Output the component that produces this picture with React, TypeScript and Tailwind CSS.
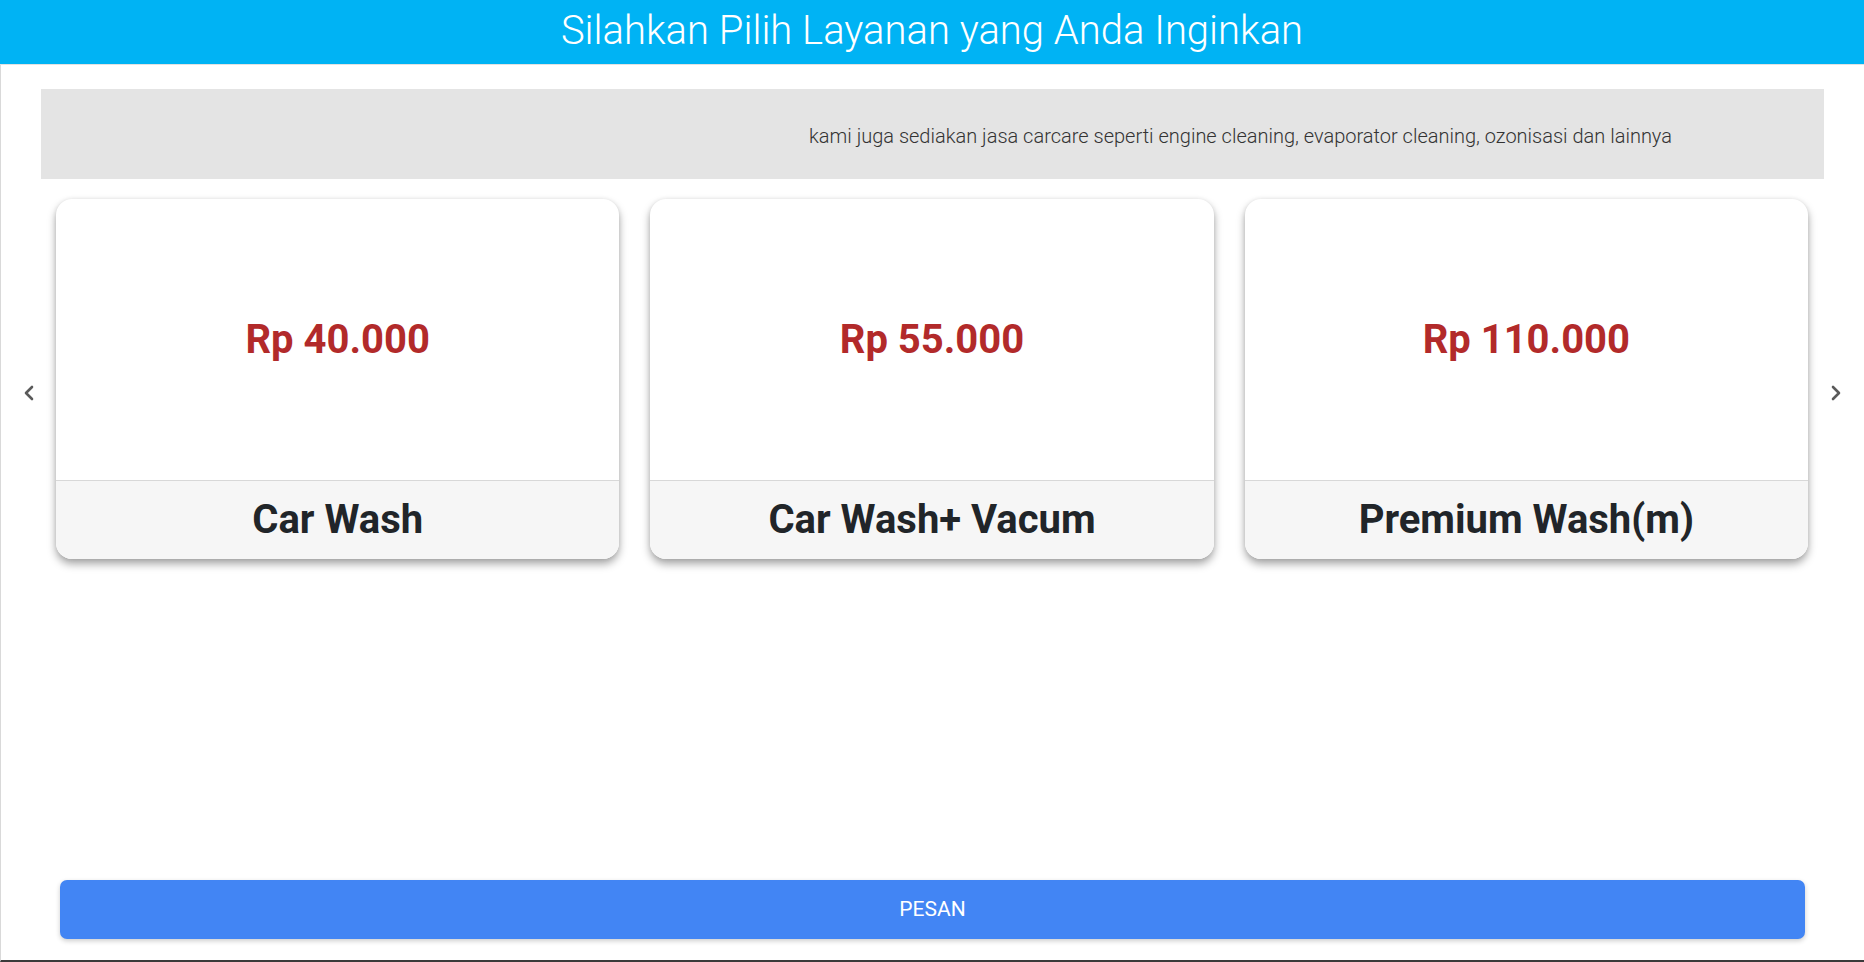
import React from "react";

type Layanan = {
  nama: string;
  harga: string;
};

const daftarLayanan: Layanan[] = [
  { nama: "Car Wash", harga: "Rp 40.000" },
  { nama: "Car Wash+ Vacum", harga: "Rp 55.000" },
  { nama: "Premium Wash(m)", harga: "Rp 110.000" },
];

const Chevron = ({ arah }: { arah: "kiri" | "kanan" }) => (
  <svg width="12" height="16" viewBox="0 0 12 16" fill="none">
    <path
      d={arah === "kiri" ? "M9 2L3 8l6 6" : "M3 2l6 6-6 6"}
      stroke="#5a5a5a"
      strokeWidth="2.6"
      strokeLinecap="round"
      strokeLinejoin="round"
    />
  </svg>
);

const KartuLayanan = ({ layanan }: { layanan: Layanan }) => (
  <div className="flex h-[360px] flex-col overflow-hidden rounded-2xl bg-white shadow-[0_5px_8px_rgba(0,0,0,0.35),0_0_4px_rgba(0,0,0,0.08)]">
    <div className="flex h-[281px] items-center justify-center">
      <p className="text-[40px] font-bold text-[#b22a2a]">{layanan.harga}</p>
    </div>
    <div className="flex flex-1 items-center justify-center border-t border-[#d8d8d8] bg-[#f6f6f6]">
      <p className="text-[40px] font-bold text-[#212529]">{layanan.nama}</p>
    </div>
  </div>
);

const App = () => {
  return (
    <div className="flex h-screen flex-col bg-white font-['Roboto',sans-serif]">
      <header className="flex h-[65px] shrink-0 items-center justify-center border-b border-[#e2e2e2] bg-[#00b3f4]">
        <h1 className="pb-[2px] text-[40px] font-light text-white">
          Silahkan Pilih Layanan yang Anda Inginkan
        </h1>
      </header>

      <main className="flex flex-1 flex-col border-b-2 border-l border-[#d9d9d9] border-b-[#3a3a3a]">
        <div className="mx-[40px] mt-[24px] flex h-[90px] items-center bg-[#e4e4e4] pl-[768px]">
          <p className="whitespace-nowrap pt-[4px] text-[20px] font-light text-[#333]">
            kami juga sediakan jasa carcare seperti engine cleaning, evaporator cleaning, ozonisasi dan lainnya
          </p>
        </div>

        <div className="mt-[20px] flex items-center">
          <button className="flex w-[55px] justify-center pt-[27px]">
            <Chevron arah="kiri" />
          </button>
          <div className="grid flex-1 grid-cols-3 gap-[31px]">
            {daftarLayanan.map((layanan) => (
              <KartuLayanan key={layanan.nama} layanan={layanan} />
            ))}
          </div>
          <button className="flex w-[56px] justify-center pt-[27px]">
            <Chevron arah="kanan" />
          </button>
        </div>

        <div className="flex-1" />

        <div className="mb-[21px] ml-[59px] mr-[59px]">
          <button className="h-[59px] w-full rounded-[7px] bg-[#4285f4] text-[21px] text-white shadow-[0_2px_5px_rgba(0,0,0,0.2)]">
            PESAN
          </button>
        </div>
      </main>
    </div>
  );
};

export default App;
